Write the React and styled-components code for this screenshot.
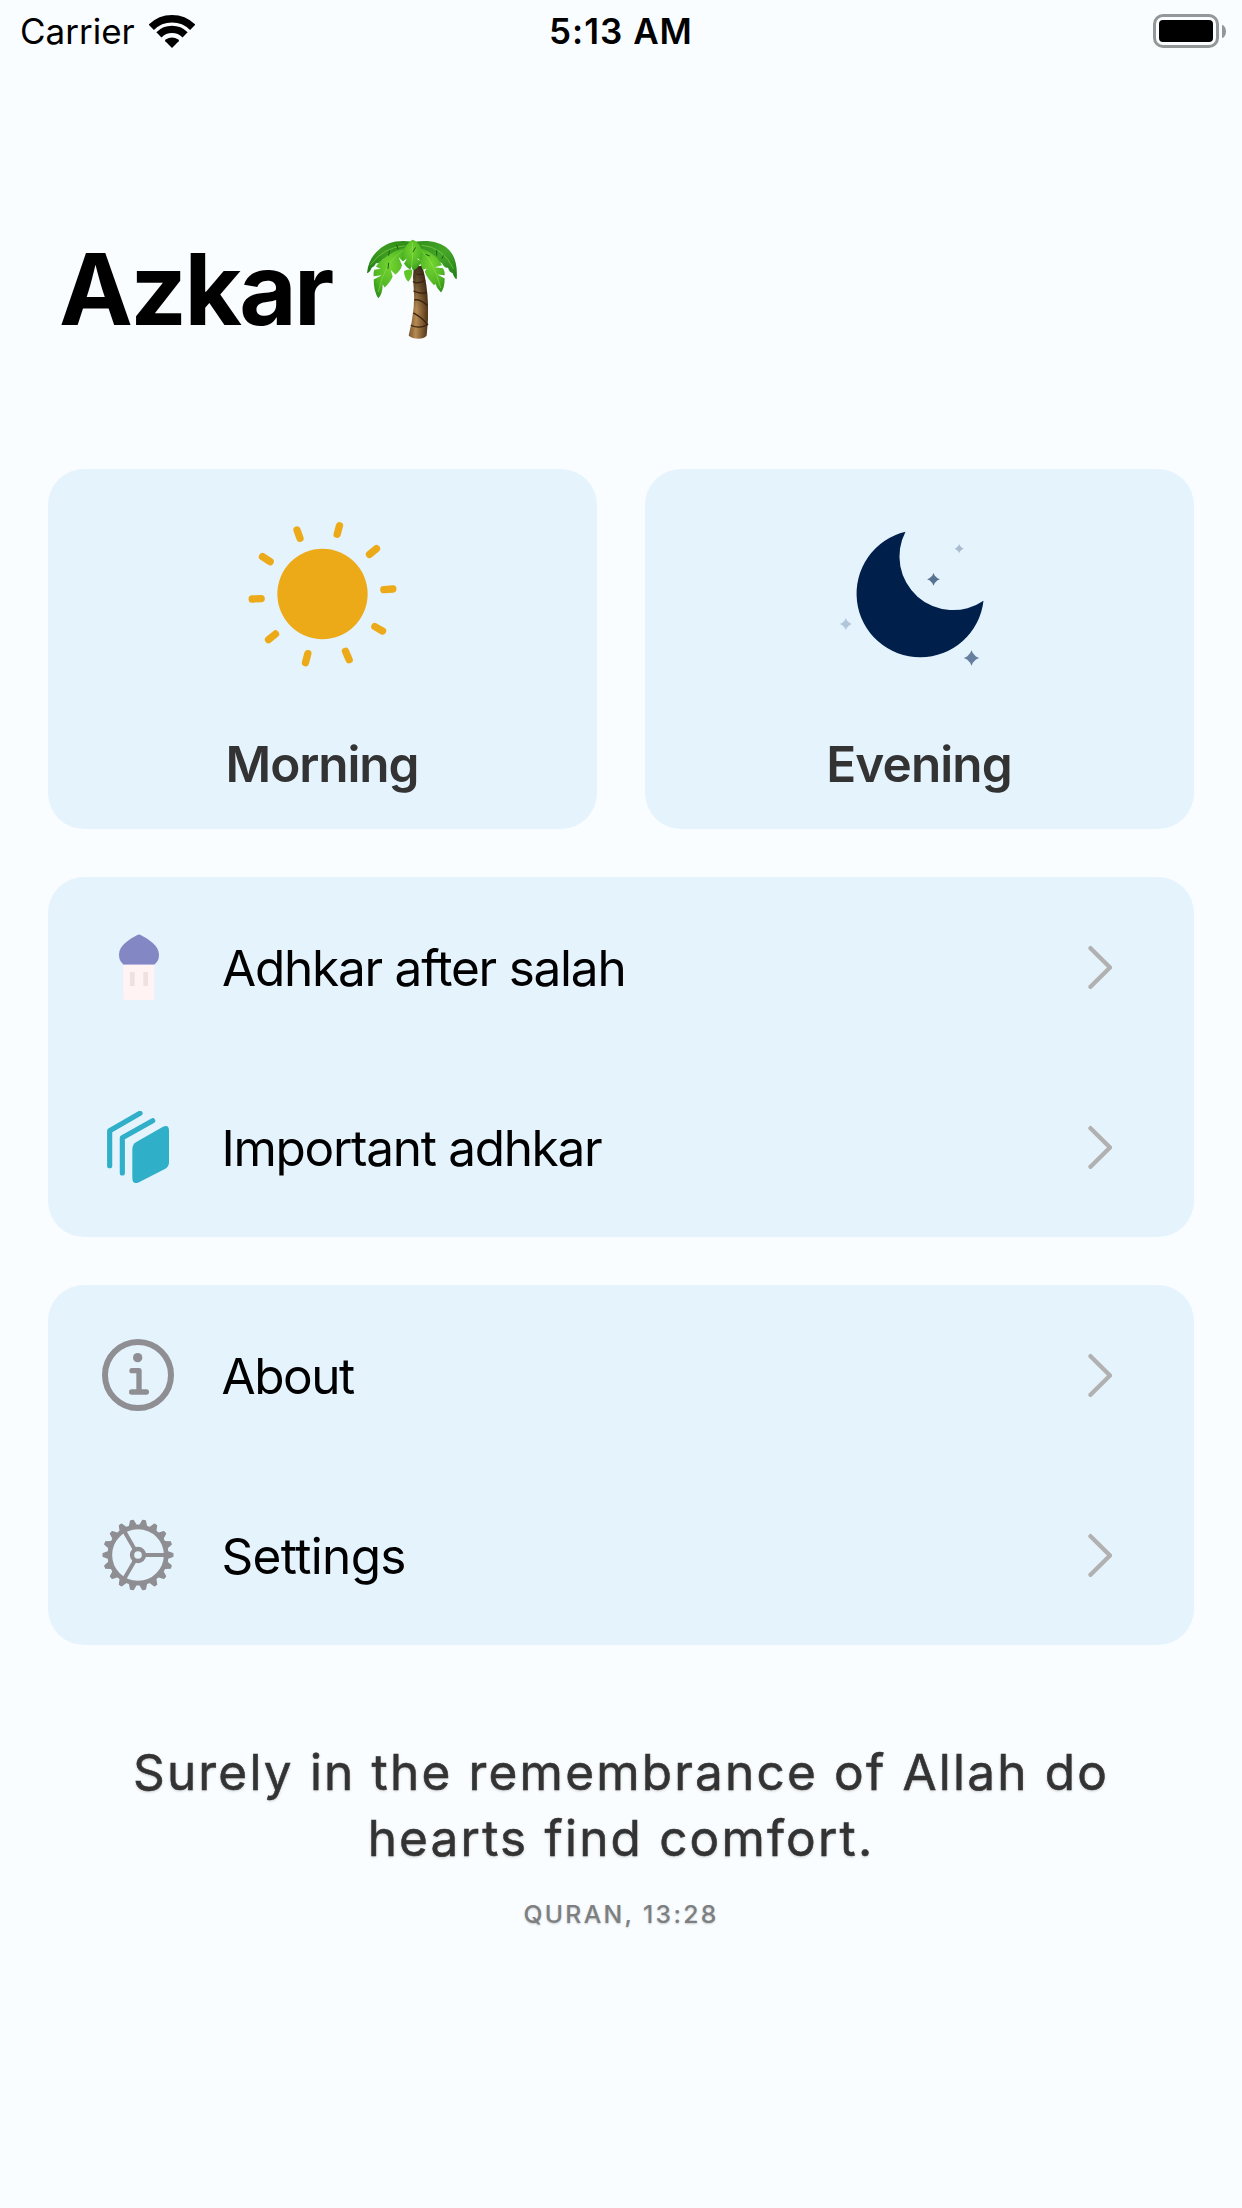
import React from "react";
import styled, { createGlobalStyle } from "styled-components";

const GlobalStyle = createGlobalStyle`
  body {
    margin: 0;
    background: #fafdff;
    font-family: Inter, "Liberation Sans", sans-serif;
    color: #000;
  }
`;

const Screen = styled.div`
  width: 1242px;
  height: 2208px;
  box-sizing: border-box;
  display: flex;
  flex-direction: column;
  overflow: hidden;
  background: #fafdff;
`;

const StatusBar = styled.header`
  height: 60px;
  flex: none;
  display: grid;
  grid-template-columns: 1fr auto 1fr;
  align-items: center;
  padding: 0 16px 0 20px;
  font-size: 35px;
  line-height: 62px;
`;

const Carrier = styled.div`
  display: flex;
  align-items: center;
  gap: 14px;

  svg {
    width: 46px;
    height: 33px;
  }
`;

const Clock = styled.div`
  margin-right: 4px;
  font-weight: 600;
  letter-spacing: 1px;
`;

const Battery = styled.div`
  justify-self: end;
  display: flex;
  align-items: center;
  gap: 3px;
`;

const BatteryShell = styled.div`
  width: 66px;
  height: 34px;
  box-sizing: border-box;
  padding: 3px;
  border: 3px solid #949798;
  border-radius: 10px;
`;

const BatteryCharge = styled.div`
  height: 100%;
  border-radius: 4px;
  background: #000;
`;

const BatteryCap = styled.div`
  width: 4px;
  height: 13px;
  border-radius: 0 4px 4px 0 / 0 6.5px 6.5px 0;
  background: #949798;
`;

const Title = styled.h1`
  display: flex;
  align-items: center;
  gap: 33.5px;
  height: 120px;
  margin: 169px 0 120px 59px;
  font-size: 99px;
  font-weight: 700;
  line-height: 120px;
  letter-spacing: -2.6px;

  svg {
    width: 95px;
    height: 102px;
  }
`;

const Content = styled.main`
  display: flex;
  flex-direction: column;
  gap: 48px;
  padding: 0 48px;
`;

const Tiles = styled.div`
  display: grid;
  grid-template-columns: 1fr 1fr;
  gap: 48px;
`;

const Tile = styled.div`
  height: 360px;
  box-sizing: border-box;
  display: flex;
  flex-direction: column;
  align-items: center;
  justify-content: space-between;
  padding: 52px 1px 35px 0;
  border-radius: 36px;
  background: #e5f3fd;
`;

const TileLabel = styled.div`
  font-size: 49.5px;
  font-weight: 600;
  line-height: 60px;
  letter-spacing: ${(p) => p.$tracking}px;
  color: #333;
`;

const Group = styled.div`
  border-radius: 36px;
  background: #e5f3fd;
`;

const Item = styled.div`
  height: 180px;
  display: flex;
  align-items: center;
  padding: 0 82px 0 54px;

  > svg:first-child {
    width: 72px;
    height: 72px;
  }
`;

const ItemLabel = styled.div`
  flex: 1;
  padding-top: 2px;
  margin-left: ${(p) => p.$inset}px;
  font-size: 49.5px;
  line-height: 60px;
  letter-spacing: ${(p) => p.$tracking}px;
`;

const Quote = styled.blockquote`
  margin: 94px 0 0;
  text-align: center;
  font-size: 49.5px;
  line-height: 66px;
  letter-spacing: 2.18px;
  color: #333;
  -webkit-text-stroke: 0.5px #333;
  text-shadow: 0 1px 3px rgba(0, 0, 0, 0.22);
`;

const Source = styled.div`
  margin-top: 28px;
  text-align: center;
  font-size: 24.75px;
  font-weight: 500;
  line-height: 30px;
  letter-spacing: 2.3px;
  color: #7d7f81;
  text-shadow: 0 1px 2px rgba(0, 0, 0, 0.2);
`;

const Wifi = () => (
  <svg viewBox="0 0 46 33" fill="none" stroke="#000">
    <path d="M2.3 12.3A29.3 29.3 0 0 1 43.7 12.3" strokeWidth="7.4" />
    <path d="M9.9 19.9A18.5 18.5 0 0 1 36.1 19.9" strokeWidth="7.2" />
    <path d="M23 33L16.3 26.2Q15.6 25.2 16.6 24.4Q23 20.6 29.4 24.4Q30.4 25.2 29.7 26.2Z" fill="#000" stroke="none" />
  </svg>
);

const Palm = () => (
  <svg viewBox="975 55 285 305">
    <defs>
      <linearGradient id="trunk" x1="0" x2="1" y1="0" y2="0.1">
        <stop offset="0" stopColor="#6d4a26" />
        <stop offset="0.45" stopColor="#b58a52" />
        <stop offset="1" stopColor="#59391a" />
      </linearGradient>
      <linearGradient id="shade" x1="0" x2="0" y1="0" y2="1">
        <stop offset="0" stopColor="#000" stopOpacity="0.65" />
        <stop offset="0.6" stopColor="#000" stopOpacity="0" />
      </linearGradient>
      <linearGradient id="backL" x1="1" x2="0" y1="0" y2="1">
        <stop offset="0" stopColor="#2b8a16" />
        <stop offset="0.5" stopColor="#3f9c22" />
        <stop offset="1" stopColor="#1f7a14" />
      </linearGradient>
      <linearGradient id="backR" x1="0" x2="1" y1="0" y2="1">
        <stop offset="0" stopColor="#2f8f1b" />
        <stop offset="0.5" stopColor="#46a628" />
        <stop offset="1" stopColor="#1f7d16" />
      </linearGradient>
      <radialGradient id="frond" cx="0.5" cy="0.35" r="0.75">
        <stop offset="0" stopColor="#74d431" />
        <stop offset="0.6" stopColor="#52b824" />
        <stop offset="1" stopColor="#2f8d1a" />
      </radialGradient>
    </defs>
    <path d="M1122 140Q1117 170 1121 200Q1124 235 1121 262Q1117 305 1106 347Q1116 357 1135 357Q1153 357 1160 347Q1166 300 1164 255Q1162 190 1146 138Z" fill="url(#trunk)" />
    <path d="M1122 140Q1117 170 1121 200Q1124 235 1121 262Q1117 305 1106 347Q1116 357 1135 357Q1153 357 1160 347Q1166 300 1164 255Q1162 190 1146 138Z" fill="url(#shade)" />
    <g fill="none" stroke="#3d2410" strokeWidth="4" strokeLinecap="round">
      <path d="M1120 186Q1138 193 1154 182" />
      <path d="M1122 214Q1142 224 1159 218" />
      <path d="M1124 240Q1142 238 1161 256" />
      <path d="M1121 280Q1142 290 1163 314" />
      <path d="M1114 317Q1138 327 1160 316" />
      <path d="M1131 163Q1140 166 1150 162" />
    </g>
    <path d="M1118 66C1070 58 1040 70 1018 88C998 104 984 128 981 160Q990 158 995 144Q1004 140 1008 130Q1020 132 1028 118L1092 96Z" fill="url(#backL)" />
    <path d="M1124 66C1165 60 1200 66 1225 88C1246 108 1253 140 1250 178Q1242 174 1238 160Q1228 158 1224 144Q1212 144 1206 130L1150 100Z" fill="url(#backR)" />
    <path d="M1092 84C1050 98 1018 122 1008 141L1022 147L1003 150Q1000 158 1001 169L1026 166L1001 179Q1001 216 1015 235Q1028 222 1028 193L1034 203Q1052 186 1058 170L1052 150L1066 164Q1082 152 1086 136L1076 112L1088 124Q1096 112 1098 92Z" fill="url(#frond)" />
    <path d="M1138 84C1170 94 1196 114 1206 136L1184 142L1209 145Q1215 154 1214 166L1192 164L1214 176Q1214 204 1203 218Q1190 206 1186 192L1182 196Q1162 176 1154 156L1160 146L1148 150Q1138 130 1134 104Z" fill="url(#frond)" />
    <path d="M1092 154Q1102 146 1116 150Q1119 170 1105 186Q1092 172 1092 154Z" fill="#5fc528" />
    <path d="M1117 60Q1096 74 1088 96Q1082 116 1089 124L1101 116L1092 132Q1100 144 1111 150L1114 140L1119 152Q1136 146 1143 126L1130 116L1145 120Q1150 96 1140 78Q1130 64 1117 60Z" fill="url(#frond)" />
    <g fill="none" stroke="#a0e85a" strokeWidth="2.5" strokeLinecap="round" opacity="0.6">
      <path d="M1117 68Q1120 105 1115 140" />
      <path d="M1088 92Q1034 126 1015 215" />
      <path d="M1144 92Q1182 124 1202 204" />
      <path d="M1094 78Q1030 82 992 134" />
      <path d="M1146 76Q1210 82 1240 146" />
    </g>
    <g fill="none" stroke="#1b6210" strokeWidth="3" strokeLinecap="round">
      <path d="M1070 76L1074 87" />
      <path d="M1048 93L1046 106" />
      <path d="M1126 84L1119 96" />
      <path d="M1190 92L1190 106" />
      <path d="M1210 108L1206 116" />
      <path d="M1158 104L1168 108" />
      <path d="M1046 130L1044 146" />
    </g>
  </svg>
);

const rays = [
  [232.5, 91, 241.5, 116],
  [360, 78, 353, 104],
  [471, 147, 450, 164],
  [520, 268, 493, 270],
  [489, 394, 466, 381],
  [389, 480, 378, 455],
  [258, 489, 265, 462],
  [147, 420, 168, 403],
  [98, 298, 125, 297],
  [129, 171, 152, 186],
];

const Sun = () => (
  <svg width="150" height="147" viewBox="82.5 64 450 441">
    <circle cx="309" cy="283" r="135.5" fill="#ecaa18" />
    <g stroke="#ecaa18" strokeWidth="22" strokeLinecap="round">
      {rays.map(([x1, y1, x2, y2]) => (
        <line key={x1} x1={x1} y1={y1} x2={x2} y2={y2} />
      ))}
    </g>
  </svg>
);

const Star = ({ x, y, r, fill }) => {
  const k = r * 0.4;
  return (
    <path
      fill={fill}
      d={`M${x} ${y - r}Q${x + k * 0.5} ${y - k * 1.15} ${x + k} ${y - k}Q${x + k * 1.15} ${y - k * 0.5} ${x + r} ${y}Q${x + k * 1.15} ${y + k * 0.5} ${x + k} ${y + k}Q${x + k * 0.5} ${y + k * 1.15} ${x} ${y + r}Q${x - k * 0.5} ${y + k * 1.15} ${x - k} ${y + k}Q${x - k * 1.15} ${y + k * 0.5} ${x - r} ${y}Q${x - k * 1.15} ${y - k * 0.5} ${x - k} ${y - k}Q${x - k * 0.5} ${y - k * 1.15} ${x} ${y - r}Z`}
    />
  );
};

const Moon = () => (
  <svg width="160" height="147" viewBox="118.5 64 480 441">
    <path d="M318 96A191 191 0 1 0 552 303A161 161 0 0 1 318 96Z" fill="#00204b" />
    <Star x={402} y={239} r={19} fill="#587391" />
    <Star x={479} y={147} r={14} fill="#a9bccf" />
    <Star x={139} y={373} r={18} fill="#b2c5da" />
    <Star x={516} y={475} r={23} fill="#667f9f" />
  </svg>
);

const Mosque = () => (
  <svg viewBox="36 33 216 216">
    <rect x="100" y="126" width="93" height="114" rx="6" fill="#fff3f3" />
    <rect x="99" y="131" width="95" height="4" fill="#b5b5dd" />
    <path d="M142 45Q147 42 152 45C176 58 207 76 207 104Q207 122 195 132H99Q87 122 87 104C87 76 118 58 142 45Z" fill="#8388c5" />
    <rect x="120" y="156" width="14" height="42" fill="#efe1df" />
    <rect x="160" y="156" width="14" height="42" fill="#efe1df" />
  </svg>
);

const Books = () => (
  <svg viewBox="36 573 216 216">
    <g fill="none" stroke="#30afc8" strokeWidth="15.5" strokeLinecap="round" strokeLinejoin="round">
      <path d="M59 737V632L150 580" />
      <path d="M97 759V653L188 602" />
    </g>
    <path d="M127 688Q127 673 139 666L219 620Q237 612 237 632V727Q237 740 226 746L147 787Q127 795 127 774Z" fill="#30afc8" />
  </svg>
);

const Info = () => (
  <svg viewBox="36 42 216 216">
    <circle cx="144" cy="150" r="99" fill="none" stroke="#8e8e93" strokeWidth="18" />
    <circle cx="143" cy="98" r="14" fill="#8e8e93" />
    <path d="M126 137H147V201M125 201H169" fill="none" stroke="#8e8e93" strokeWidth="16" strokeLinecap="round" strokeLinejoin="round" />
  </svg>
);

const Gear = () => (
  <svg viewBox="-108 -108 216 216" stroke="#8e8e93" fill="none">
    <circle r="84.5" strokeWidth="14" />
    {Array.from({ length: 18 }, (_, i) => (
      <path key={i} d="M-10.5 -88L-4 -104.5H4L10.5 -88Z" fill="#8e8e93" strokeWidth="4" strokeLinejoin="round" transform={`rotate(${i * 20 + 10})`} />
    ))}
    <circle r="18" strokeWidth="13" />
    {[90, 210, 330].map((a) => (
      <path key={a} d="M0 -20V-84" strokeWidth="12" transform={`rotate(${a})`} />
    ))}
  </svg>
);

const Chevron = () => (
  <svg width="24.5" height="44" viewBox="143.5 254.5 73.5 132" fill="none" stroke="#b1b1b1" strokeWidth="13" strokeLinecap="round">
    <path d="M151 264L209.5 322L151 380" strokeLinejoin="round" />
  </svg>
);

const groups = [
  [
    { icon: Mosque, label: "Adhkar after salah", tracking: -1.24, inset: 48 },
    { icon: Books, label: "Important adhkar", tracking: -1.3, inset: 47.5 },
  ],
  [
    { icon: Info, label: "About", tracking: -1.5, inset: 47.5 },
    { icon: Gear, label: "Settings", tracking: -0.65, inset: 47.5 },
  ],
];

export default function App() {
  return (
    <Screen>
      <GlobalStyle />
      <StatusBar>
        <Carrier>
          Carrier
          <Wifi />
        </Carrier>
        <Clock>5:13 AM</Clock>
        <Battery>
          <BatteryShell>
            <BatteryCharge />
          </BatteryShell>
          <BatteryCap />
        </Battery>
      </StatusBar>
      <Title>
        Azkar
        <Palm />
      </Title>
      <Content>
        <Tiles>
          <Tile>
            <Sun />
            <TileLabel $tracking={-1.08}>Morning</TileLabel>
          </Tile>
          <Tile>
            <Moon />
            <TileLabel $tracking={-0.9}>Evening</TileLabel>
          </Tile>
        </Tiles>
        {groups.map((items, i) => (
          <Group key={i}>
            {items.map(({ icon: Icon, label, tracking, inset }) => (
              <Item key={label}>
                <Icon />
                <ItemLabel $tracking={tracking} $inset={inset}>
                  {label}
                </ItemLabel>
                <Chevron />
              </Item>
            ))}
          </Group>
        ))}
      </Content>
      <Quote>
        Surely in the remembrance of Allah do
        <br />
        hearts find comfort.
      </Quote>
      <Source>QURAN, 13:28</Source>
    </Screen>
  );
}
